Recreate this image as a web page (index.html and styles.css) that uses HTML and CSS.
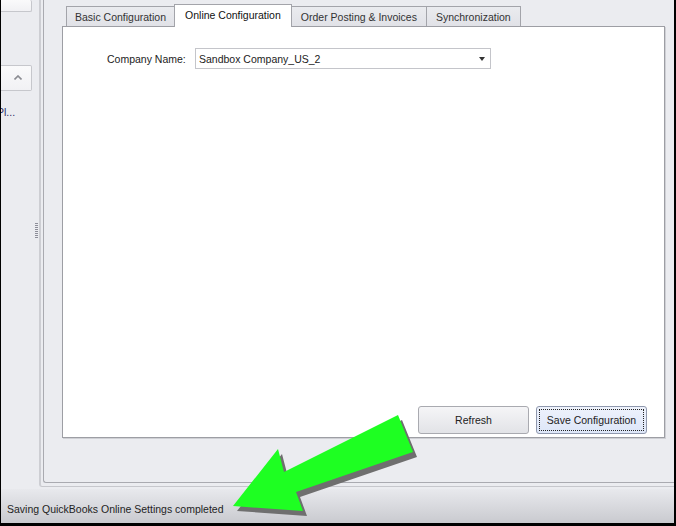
FILE: index.html
```html
<!DOCTYPE html>
<html lang="en">
<head>
    <meta charset="UTF-8">
    <title>QuickBooks Online Settings</title>
    <link rel="stylesheet" href="styles.css">
</head>
<body>
    <div class="window">
        <div class="main">
            <aside class="sidebar">
                <div class="side-items">
                    <div class="nav-card nav-card-top"></div>
                    <div class="nav-card nav-card-group">
                        <svg class="chevron" width="8" height="5" viewBox="0 0 8 5">
                            <polyline points="0.5,4.5 4,1 7.5,4.5" fill="none" stroke="#8b8c92" stroke-width="1.6"/>
                        </svg>
                    </div>
                    <div class="nav-text">Pl...</div>
                </div>
                <div class="grip"></div>
            </aside>

            <div class="frame-outer">
                <div class="frame-inner">
                    <div class="tabs">
                        <div class="tab tab-first">Basic Configuration</div>
                        <div class="tab active">Online Configuration</div>
                        <div class="tab">Order Posting &amp; Invoices</div>
                        <div class="tab">Synchronization</div>
                    </div>
                    <div class="tab-page">
                        <div class="field-row">
                            <label class="field-label">Company Name:</label>
                            <div class="combo">
                                <span class="combo-value">Sandbox Company_US_2</span>
                                <span class="combo-arrow"></span>
                            </div>
                        </div>
                        <div class="actions">
                            <button class="btn">Refresh</button>
                            <button class="btn btn-focused"><span class="focus-rect">Save Configuration</span></button>
                        </div>
                    </div>
                </div>
            </div>
        </div>

        <div class="statusbar">Saving QuickBooks Online Settings completed</div>

        <!-- callout arrow drawn over the screenshot -->
        <svg class="callout" width="676" height="526" viewBox="0 0 676 526">
            <polygon transform="translate(4,5)" fill="#6f6f6f"
                points="398,415 413,452 296,492 303,511 233,506 278,449 284,472"/>
            <polygon fill="#1eff22"
                points="398,415 413,452 296,492 303,511 233,506 278,449 284,472"/>
        </svg>
    </div>
</body>
</html>
```

FILE: styles.css
```css
body {
    margin: 0;
    padding: 0;
    font-family: "Liberation Sans", Arial, sans-serif;
    font-size: 10.5px;
    color: #222;
}

.window {
    position: relative;
    width: 676px;
    height: 526px;
    box-sizing: border-box;
    border-left: 1px solid #000;
    border-right: 2px solid #000;
    border-bottom: 3px solid #000;
    background-color: #ebecf0;
    display: flex;
    flex-direction: column;
    overflow: hidden;
}

.main {
    display: flex;
    height: 489px;
}

/* left navigation pane (mostly collapsed) */
.sidebar {
    width: 38px;
    display: flex;
    overflow: hidden;
}

.side-items {
    width: 33px;
    display: flex;
    flex-direction: column;
}

.nav-card {
    width: 30px;
    background: linear-gradient(#fafafb, #f1f1f4);
    border: 1px solid #c6c7cc;
    border-left: none;
    border-radius: 0 2px 2px 0;
}

.nav-card-top {
    height: 11px;
    border-top: none;
}

.nav-card-group {
    height: 24px;
    margin-top: 53px;
    display: flex;
    align-items: center;
    justify-content: flex-end;
}

.chevron {
    margin-right: 9px;
    margin-top: -2px;
}

.nav-text {
    margin-top: 15px;
    margin-left: -4px;
    color: #2a2a66;
    white-space: nowrap;
}

.grip {
    width: 3px;
    height: 15px;
    margin: 223px 0 0 1px;
    background: repeating-linear-gradient(#8d8e99 0 1px, transparent 1px 2px);
}

/* nested group frames */
.frame-outer {
    flex: 1;
    display: flex;
    border-left: 2px solid #cdced3;
    border-bottom: 1px solid #c6c7cc;
    border-bottom-left-radius: 3px;
    padding: 0 0 3px 2px;
    margin-bottom: 2px;
}

.frame-inner {
    flex: 1;
    display: flex;
    flex-direction: column;
    border-left: 1px solid #a9aab0;
    border-bottom: 1px solid #a9aab0;
    border-bottom-left-radius: 3px;
    padding: 0 9px 44px 18px;
}

.tabs {
    display: flex;
    align-items: flex-end;
    height: 22px;
    margin-top: 4px;
    padding-left: 4px;
}

.tab {
    height: 19px;
    line-height: 20px;
    padding: 0 9px;
    background: linear-gradient(#eaebef, #e1e2e7);
    border: 1px solid #a3a4aa;
    border-bottom: none;
    margin-right: -1px;
    color: #333;
    white-space: nowrap;
}

.tab-first {
    padding: 0 8px;
}

.tab.active {
    position: relative;
    z-index: 1;
    height: 22px;
    line-height: 20px;
    margin-bottom: -1px;
    padding: 0 10px;
    background: #fff;
    color: #111;
}

.tab-page {
    flex: 1;
    display: flex;
    flex-direction: column;
    background-color: #fff;
    border: 1px solid #9d9ea4;
    box-shadow: 1px 1px 0 #cfd0d5;
    padding-top: 21px;
}

.field-row {
    display: flex;
    align-items: center;
    padding-left: 44px;
}

.field-label {
    width: 78px;
    margin-right: 10px;
    text-align: right;
    white-space: nowrap;
}

.combo {
    width: 296px;
    height: 21px;
    box-sizing: border-box;
    border: 1px solid #c4c5ca;
    display: flex;
    align-items: center;
    justify-content: space-between;
    padding: 0 5px 0 3px;
}

.combo-arrow {
    width: 0;
    height: 0;
    border-top: 4px solid #333;
    border-left: 3.5px solid transparent;
    border-right: 3.5px solid transparent;
}

.actions {
    margin-top: auto;
    display: flex;
    justify-content: flex-end;
    gap: 7px;
    padding: 0 17px 3px 0;
}

.btn {
    width: 111px;
    height: 28px;
    padding: 2px;
    font-family: inherit;
    font-size: 10.5px;
    color: #222;
    background: linear-gradient(#f5f5f7, #e2e3e7);
    border: 1px solid #a9aab0;
    border-radius: 3px;
}

.btn-focused {
    background: linear-gradient(#eef2fc, #dde6f8);
    border-color: #8f98ad;
}

.focus-rect {
    display: flex;
    align-items: center;
    justify-content: center;
    height: 100%;
    box-sizing: border-box;
    border: 1px dotted #222;
}

.statusbar {
    height: 34px;
    box-sizing: border-box;
    padding: 5px 0 0 6px;
    display: flex;
    align-items: center;
    background: linear-gradient(#e8e9ed, #c9cacf);
    color: #1e1e1e;
}

.callout {
    position: absolute;
    left: -1px;
    top: 0;
    pointer-events: none;
}
```
